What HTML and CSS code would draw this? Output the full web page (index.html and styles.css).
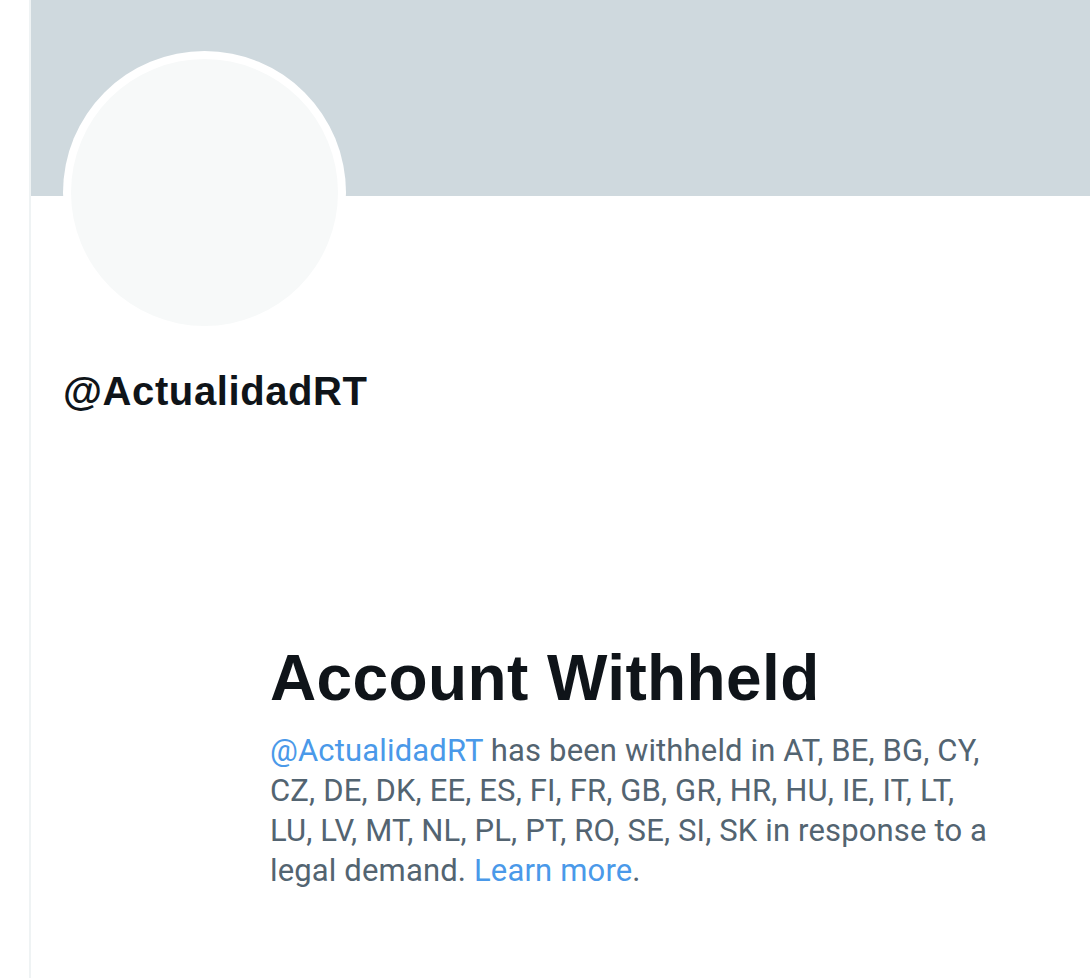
FILE: index.html
```html
<!DOCTYPE html>
<html lang="en">
<head>
<meta charset="utf-8">
<title>@ActualidadRT</title>
<link rel="stylesheet" href="styles.css">
</head>
<body>
<div class="page">
  <main class="column">
    <div class="banner"></div>
    <div class="profile">
      <div class="avatar"><div class="avatar-inner"></div></div>
      <div class="handle">@ActualidadRT</div>
    </div>
    <section class="withheld">
      <h1 class="title">Account Withheld</h1>
      <p class="message"><a class="link" href="#">@ActualidadRT</a> has been withheld in AT, BE, BG, CY,<br>CZ, DE, DK, EE, ES, FI, FR, GB, GR, HR, HU, IE, IT, LT,<br>LU, LV, MT, NL, PL, PT, RO, SE, SI, SK in response to a<br>legal demand. <a class="link" href="#">Learn more</a>.</p>
    </section>
  </main>
</div>
</body>
</html>
```

FILE: styles.css
```css
html, body {
  margin: 0;
  padding: 0;
  background: #ffffff;
  font-family: "Liberation Sans", Arial, sans-serif;
}
.page {
  padding-left: 29px;
  height: 978px;
  overflow: hidden;
}
.column {
  border-left: 2px solid #eff3f4;
  height: 100%;
  box-sizing: border-box;
}
.banner {
  height: 196px;
  background: #cfd9de;
}
.profile {
  padding-left: 32px;
}
.avatar {
  width: 283px;
  height: 283px;
  margin-top: -145px;
  border-radius: 50%;
  background: #ffffff;
  padding: 8px;
  box-sizing: border-box;
}
.avatar-inner {
  width: 100%;
  height: 100%;
  border-radius: 50%;
  background: #f7f9f9;
}
.handle {
  margin-top: 33px;
  font-size: 40px;
  line-height: 48px;
  font-weight: 700;
  letter-spacing: 0.6px;
  color: #0f1419;
}
.withheld {
  margin: 225px 0 0 239px;
}
.title {
  margin: 0;
  font-size: 64px;
  line-height: 76px;
  font-weight: 700;
  letter-spacing: 0.4px;
  color: #0f1419;
}
.message {
  margin: 15px 0 0;
  font-family: Roboto, "Liberation Sans", Arial, sans-serif;
  font-size: 31px;
  line-height: 40px;
  letter-spacing: 0.15px;
  color: #536471;
}
.link {
  color: #4a99e9;
  text-decoration: none;
}
```
